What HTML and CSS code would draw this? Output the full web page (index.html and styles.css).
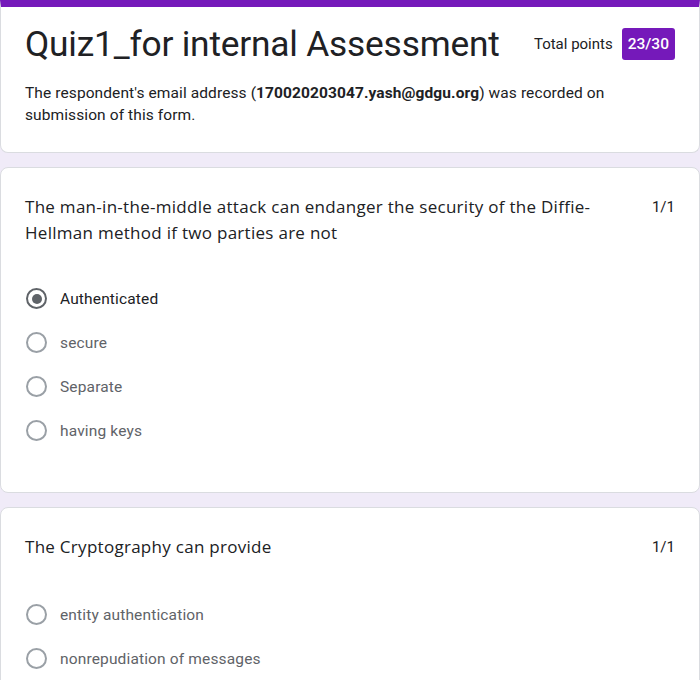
FILE: index.html
```html
<!DOCTYPE html>
<html lang="en">
<head>
<meta charset="utf-8">
<title>Quiz1_for internal Assessment</title>
<link rel="stylesheet" href="styles.css">
</head>
<body>
<div class="page">
  <section class="card header-card">
    <div class="header-top">
      <h1 class="title">Quiz1_for internal Assessment</h1>
      <div class="total">
        <span class="total-label">Total points</span>
        <span class="badge">23/30</span>
      </div>
    </div>
    <p class="email">The respondent's email address (<b>170020203047.yash@gdgu.org</b>) was recorded on submission of this form.</p>
  </section>

  <section class="card question-card q-long">
    <div class="q-head">
      <div class="q-text">The man-in-the-middle attack can endanger the security of the Diffie-Hellman method if two parties are not</div>
      <div class="q-score">1/1</div>
    </div>
    <ul class="options">
      <li class="option selected"><span class="radio"></span><span class="opt-label">Authenticated</span></li>
      <li class="option"><span class="radio"></span><span class="opt-label">secure</span></li>
      <li class="option"><span class="radio"></span><span class="opt-label">Separate</span></li>
      <li class="option"><span class="radio"></span><span class="opt-label">having keys</span></li>
    </ul>
  </section>

  <section class="card question-card q-short">
    <div class="q-head">
      <div class="q-text">The Cryptography can provide</div>
      <div class="q-score">1/1</div>
    </div>
    <ul class="options">
      <li class="option"><span class="radio"></span><span class="opt-label">entity authentication</span></li>
      <li class="option"><span class="radio"></span><span class="opt-label">nonrepudiation of messages</span></li>
    </ul>
  </section>
</div>
</body>
</html>
```
FILE: styles.css
```css
html, body {
  margin: 0;
  padding: 0;
  background: #f0ebf8;
  font-family: Roboto, "Liberation Sans", Arial, sans-serif;
  color: #202124;
}
.page {
  display: flex;
  flex-direction: column;
  gap: 14px;
  height: 680px;
  overflow: hidden;
}
.card {
  background: #fff;
  border: 1px solid #dadce0;
  border-radius: 8px;
  box-sizing: border-box;
  width: 100%;
  flex-shrink: 0;
}
.header-card {
  border-top: 7px solid #7519ba;
  border-radius: 0 0 8px 8px;
  padding: 17px 24px 24px 24px;
  height: 153px;
}
.header-top {
  display: flex;
  justify-content: space-between;
  align-items: flex-start;
}
.title {
  margin: 0;
  font-weight: 400;
  font-size: 35.3px;
  line-height: 40px;
  letter-spacing: -0.2px;
  color: #202124;
}
.total {
  display: flex;
  align-items: center;
  gap: 9px;
  margin-top: 4px;
}
.total-label {
  font-size: 15px;
  color: #202124;
}
.badge {
  background: #7519ba;
  color: #fff;
  font-size: 15.5px;
  font-weight: 500;
  border-radius: 3px;
  padding: 0 6px;
  height: 32px;
  line-height: 32px;
}
.email {
  margin: 18px 0 0 0;
  max-width: 620px;
  font-size: 15.5px;
  line-height: 22px;
  letter-spacing: 0.1px;
  color: #202124;
}
.email b {
  font-weight: 700;
}
.question-card {
  padding: 26px 24px 24px 24px;
}
.q-long {
  height: 326px;
}
.q-head {
  display: flex;
  justify-content: space-between;
  align-items: flex-start;
  gap: 40px;
}
.q-text {
  font-family: "Open Sans", Roboto, sans-serif;
  font-size: 17px;
  line-height: 26px;
  color: #202124;
  letter-spacing: 0.28px;
}
.q-score {
  font-size: 15px;
  line-height: 26px;
  color: #202124;
  flex-shrink: 0;
}
.options {
  list-style: none;
  margin: 42px 0 0 0;
  padding: 0;
  display: flex;
  flex-direction: column;
  gap: 23px;
}
.q-short .options {
  margin-top: 44px;
}
.option {
  display: flex;
  align-items: center;
  gap: 13px;
  height: 21px;
  font-size: 15.5px;
  letter-spacing: 0.15px;
  color: #5f6368;
}
.option.selected {
  color: #202124;
}
.radio {
  width: 21px;
  height: 21px;
  box-sizing: border-box;
  border: 2px solid #9aa0a6;
  border-radius: 50%;
  margin-left: 1px;
  display: flex;
  align-items: center;
  justify-content: center;
  flex-shrink: 0;
}
.option.selected .radio {
  border-color: #5f6368;
}
.option.selected .radio::after {
  content: "";
  width: 10px;
  height: 10px;
  border-radius: 50%;
  background: #5f6368;
}
```
